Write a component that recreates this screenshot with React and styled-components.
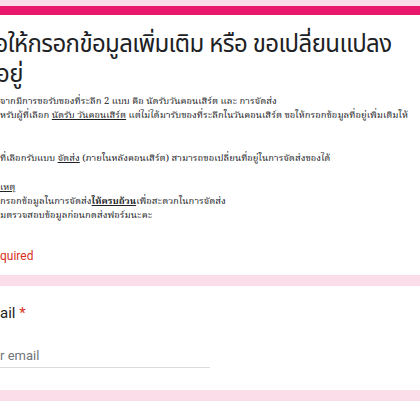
import React from 'react'
import styled, { createGlobalStyle } from 'styled-components'

const GlobalStyle = createGlobalStyle`
  body {
    margin: 0;
    background: #fbdce9;
    font-family: Roboto, 'Noto Sans', sans-serif;
    overflow: hidden;
  }
`

const Page = styled.main`
  display: flex;
  flex-direction: column;
  gap: 11px;
  padding-top: 6px;
  margin: 0 -60px 0 -18px;
`

const Card = styled.section`
  background: #fff;
  border-radius: 8px;
  border-top: ${(p) => (p.$accent ? '9px solid #e8196d' : 'none')};
  padding: ${(p) => p.$pad || '24px'};
  min-height: ${(p) => p.$minH || 'auto'};
`

const Title = styled.h1`
  margin: 0;
  font-family: 'Noto Sans Thai', 'Noto Sans', sans-serif;
  font-weight: 400;
  font-size: 24px;
  letter-spacing: -0.6px;
  line-height: 30px;
  white-space: nowrap;
  color: #202124;
`

const Desc = styled.div`
  margin-top: 5px;
  padding-left: 18px;
  font-family: 'Noto Serif Thai', 'Liberation Serif', serif;
  font-size: 9.5px;
  line-height: 14.3px;
  color: #202124;
  white-space: nowrap;
  p {
    margin: 0;
    min-height: 14.3px;
  }
  u {
    text-decoration-thickness: 1px;
  }
`

const Required = styled.div`
  margin-top: 25px;
  padding-left: 18px;
  font-size: 12px;
  line-height: 14px;
  color: #d93025;
`

const Question = styled.div`
  font-size: 15px;
  line-height: 18px;
  color: #202124;
  span {
    color: #d93025;
  }
`

const Input = styled.div`
  margin-top: 26px;
  width: 210px;
  font-size: 13px;
  line-height: 15px;
  color: #70757a;
  padding-bottom: 4px;
  border-bottom: 1px solid #dadce0;
`

export default function App() {
  return (
    <>
      <GlobalStyle />
      <Page>
        <Card $accent $pad="15px 0 12px 0">
          <Title>
            ขอให้กรอกข้อมูลเพิ่มเติม หรือ ขอเปลี่ยนแปลง
            <br />
            ที่อยู่
          </Title>
          <Desc>
            <p>จากมีการขอรับของที่ระลึก 2 แบบ คือ นัดรับวันคอนเสิร์ต และ การจัดส่ง</p>
            <p>
              หรับผู้ที่เลือก <u>นัดรับ วันคอนเสิร์ต</u> แต่ไม่ได้มารับของที่ระลึกในวันคอนเสิร์ต ขอให้กรอกข้อมูลที่อยู่เพิ่มเติมให้
            </p>
            <p />
            <p />
            <p>
              ที่เลือกรับแบบ <u>จัดส่ง</u> (ภายในหลังคอนเสิร์ต) สามารถขอเปลี่ยนที่อยู่ในการจัดส่งของได้
            </p>
            <p />
            <p>
              <u>เหตุ</u>
            </p>
            <p>
              กรอกข้อมูลในการจัดส่ง<b><u>ให้ครบถ้วน</u></b>เพื่อสะดวกในการจัดส่ง
            </p>
            <p>มตรวจสอบข้อมูลก่อนกดส่งฟอร์มนะคะ</p>
          </Desc>
          <Required>quired</Required>
        </Card>
        <Card $pad="18px 0 22px 18px">
          <Question>
            ail <span>*</span>
          </Question>
          <Input>r email</Input>
        </Card>
        <Card $minH="40px" />
      </Page>
    </>
  )
}
